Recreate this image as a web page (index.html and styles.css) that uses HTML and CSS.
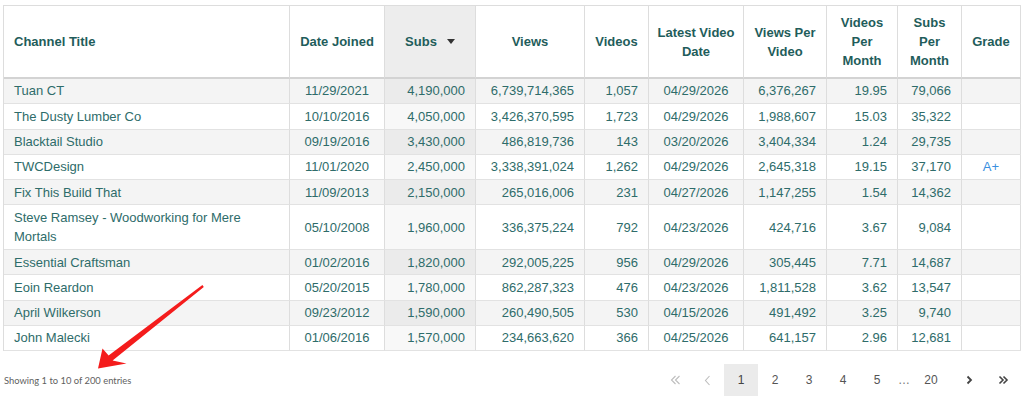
FILE: index.html
```html
<!DOCTYPE html>
<html lang="en">
<head>
<meta charset="utf-8">
<title>Channels</title>
<link rel="stylesheet" href="styles.css">
</head>
<body>
<div class="page">
  <table class="grid">
    <colgroup>
      <col class="c-title"><col class="c-date"><col class="c-subs"><col class="c-views"><col class="c-videos">
      <col class="c-latest"><col class="c-vpv"><col class="c-vpm"><col class="c-spm"><col class="c-grade">
    </colgroup>
    <thead>
      <tr>
        <th class="t-left">Channel Title</th>
        <th>Date Joined</th>
        <th class="sorted">Subs<span class="sort-desc"></span></th>
        <th>Views</th>
        <th>Videos</th>
        <th>Latest Video Date</th>
        <th>Views Per Video</th>
        <th>Videos Per Month</th>
        <th>Subs Per Month</th>
        <th>Grade</th>
      </tr>
    </thead>
    <tbody>
      <tr class="odd"><td>Tuan CT</td><td class="ctr">11/29/2021</td><td class="num sorted">4,190,000</td><td class="num">6,739,714,365</td><td class="num">1,057</td><td class="ctr">04/29/2026</td><td class="num">6,376,267</td><td class="num">19.95</td><td class="num">79,066</td><td class="ctr grade"></td></tr>
      <tr><td>The Dusty Lumber Co</td><td class="ctr">10/10/2016</td><td class="num sorted">4,050,000</td><td class="num">3,426,370,595</td><td class="num">1,723</td><td class="ctr">04/29/2026</td><td class="num">1,988,607</td><td class="num">15.03</td><td class="num">35,322</td><td class="ctr grade"></td></tr>
      <tr class="odd"><td>Blacktail Studio</td><td class="ctr">09/19/2016</td><td class="num sorted">3,430,000</td><td class="num">486,819,736</td><td class="num">143</td><td class="ctr">03/20/2026</td><td class="num">3,404,334</td><td class="num">1.24</td><td class="num">29,735</td><td class="ctr grade"></td></tr>
      <tr><td>TWCDesign</td><td class="ctr">11/01/2020</td><td class="num sorted">2,450,000</td><td class="num">3,338,391,024</td><td class="num">1,262</td><td class="ctr">04/29/2026</td><td class="num">2,645,318</td><td class="num">19.15</td><td class="num">37,170</td><td class="ctr grade">A+</td></tr>
      <tr class="odd"><td>Fix This Build That</td><td class="ctr">11/09/2013</td><td class="num sorted">2,150,000</td><td class="num">265,016,006</td><td class="num">231</td><td class="ctr">04/27/2026</td><td class="num">1,147,255</td><td class="num">1.54</td><td class="num">14,362</td><td class="ctr grade"></td></tr>
      <tr><td>Steve Ramsey - Woodworking for Mere Mortals</td><td class="ctr">05/10/2008</td><td class="num sorted">1,960,000</td><td class="num">336,375,224</td><td class="num">792</td><td class="ctr">04/23/2026</td><td class="num">424,716</td><td class="num">3.67</td><td class="num">9,084</td><td class="ctr grade"></td></tr>
      <tr class="odd"><td>Essential Craftsman</td><td class="ctr">01/02/2016</td><td class="num sorted">1,820,000</td><td class="num">292,005,225</td><td class="num">956</td><td class="ctr">04/29/2026</td><td class="num">305,445</td><td class="num">7.71</td><td class="num">14,687</td><td class="ctr grade"></td></tr>
      <tr><td>Eoin Reardon</td><td class="ctr">05/20/2015</td><td class="num sorted">1,780,000</td><td class="num">862,287,323</td><td class="num">476</td><td class="ctr">04/23/2026</td><td class="num">1,811,528</td><td class="num">3.62</td><td class="num">13,547</td><td class="ctr grade"></td></tr>
      <tr class="odd"><td>April Wilkerson</td><td class="ctr">09/23/2012</td><td class="num sorted">1,590,000</td><td class="num">260,490,505</td><td class="num">530</td><td class="ctr">04/15/2026</td><td class="num">491,492</td><td class="num">3.25</td><td class="num">9,740</td><td class="ctr grade"></td></tr>
      <tr><td>John Malecki</td><td class="ctr">01/06/2016</td><td class="num sorted">1,570,000</td><td class="num">234,663,620</td><td class="num">366</td><td class="ctr">04/25/2026</td><td class="num">641,157</td><td class="num">2.96</td><td class="num">12,681</td><td class="ctr grade"></td></tr>
    </tbody>
  </table>

  <div class="footer">
    <div class="info">Showing 1 to 10 of 200 entries</div>
    <nav class="pager">
      <span class="pg pg-first disabled"><svg width="11" height="10" viewBox="0 0 11 10"><path d="M5.5 1 L1.5 5 L5.5 9 M9.5 1 L5.5 5 L9.5 9" fill="none" stroke="#bdbdbd" stroke-width="1.1"/></svg></span>
      <span class="pg disabled"><svg width="7" height="11" viewBox="0 0 7 11"><path d="M5.5 1 L1.5 5.5 L5.5 10" fill="none" stroke="#bdbdbd" stroke-width="1.1"/></svg></span>
      <span class="pg current">1</span>
      <span class="pg">2</span>
      <span class="pg">3</span>
      <span class="pg">4</span>
      <span class="pg">5</span>
      <span class="pg pg-ellipsis">…</span>
      <span class="pg">20</span>
      <span class="pg pg-next"><svg width="7" height="10" viewBox="0 0 7 10"><path d="M1.5 1.5 L5 5 L1.5 8.5" fill="none" stroke="#444" stroke-width="1.8"/></svg></span>
      <span class="pg"><svg width="11" height="10" viewBox="0 0 11 10"><path d="M1.5 1.5 L5 5 L1.5 8.5 M5.5 1.5 L9 5 L5.5 8.5" fill="none" stroke="#444" stroke-width="1.6"/></svg></span>
    </nav>
  </div>

  <svg class="annot" width="1024" height="398" viewBox="0 0 1024 398">
    <polygon points="203.8,287 112.6,360.4 126.5,363.5 98,368.5 102.5,348.5 108.6,355.6 202.4,285" fill="#f41c1c"/>
  </svg>
</div>
</body>
</html>
```

FILE: styles.css
```css
html, body {
  margin: 0;
  background: #ffffff;
}

body {
  font-family: "Liberation Sans", Arial, sans-serif;
}

.page {
  position: relative;
  width: 1024px;
  height: 398px;
  padding: 5px 0 0 3px;
  box-sizing: border-box;
  overflow: hidden;
}

.grid {
  table-layout: fixed;
  width: 1018px;
  border-collapse: separate;
  border-spacing: 0;
  border-top: 1px solid #dddddd;
  border-left: 1px solid #dddddd;
  font-size: 13px;
  color: #2e6c6a;
}

.c-title { width: 286px; }
.c-date { width: 95px; }
.c-subs { width: 91px; }
.c-views { width: 109px; }
.c-videos { width: 64px; }
.c-latest { width: 95px; }
.c-vpv { width: 83px; }
.c-vpm { width: 71px; }
.c-spm { width: 64px; }
.c-grade { width: 59px; }

.grid th,
.grid td {
  border-right: 1px solid #dddddd;
  border-bottom: 1px solid #e2e2e2;
}

.grid th {
  font-weight: bold;
  color: #1f5d5b;
  line-height: 19px;
  padding: 7px 8px;
  border-bottom: 2px solid #d3d3d3;
  text-align: center;
  vertical-align: middle;
  background: #ffffff;
}

.grid th.t-left {
  text-align: left;
  padding-left: 10px;
}

.grid th.sorted {
  background: #ededed;
}

.sort-desc {
  display: inline-block;
  width: 0;
  height: 0;
  margin-left: 10px;
  border-left: 4px solid transparent;
  border-right: 4px solid transparent;
  border-top: 5px solid #333333;
  vertical-align: 2px;
}

.grid td {
  line-height: 19.5px;
  padding: 2.4px 10px;
  vertical-align: middle;
  background: #ffffff;
}

.grid tr.odd td {
  background: #f4f4f4;
}

.grid td.sorted {
  background: #f8f8f8;
}

.grid tr.odd td.sorted {
  background: #ebebeb;
}

.grid td.num {
  text-align: right;
}

.grid td.ctr {
  text-align: center;
}

.grid td.grade {
  color: #3a8fe0;
}

.footer {
  display: flex;
  justify-content: space-between;
  align-items: center;
  width: 1017px;
  margin-top: 13px;
}

.info {
  font-family: Lato, "Open Sans", sans-serif;
  font-size: 9.4px;
  color: #5f5f5f;
  padding-left: 1px;
}

.pager {
  display: flex;
  align-items: center;
}

.pg {
  width: 34px;
  height: 32px;
  display: flex;
  align-items: center;
  justify-content: center;
  font-size: 12px;
  color: #555555;
}

.pg-first {
  width: 30px;
}

.pg-ellipsis {
  width: 20px;
  color: #777777;
}

.pg-next {
  margin-left: 4px;
}

.pg.current {
  background: #ebebeb;
  color: #444444;
}

.annot {
  position: absolute;
  left: 0;
  top: 0;
  pointer-events: none;
}
```
